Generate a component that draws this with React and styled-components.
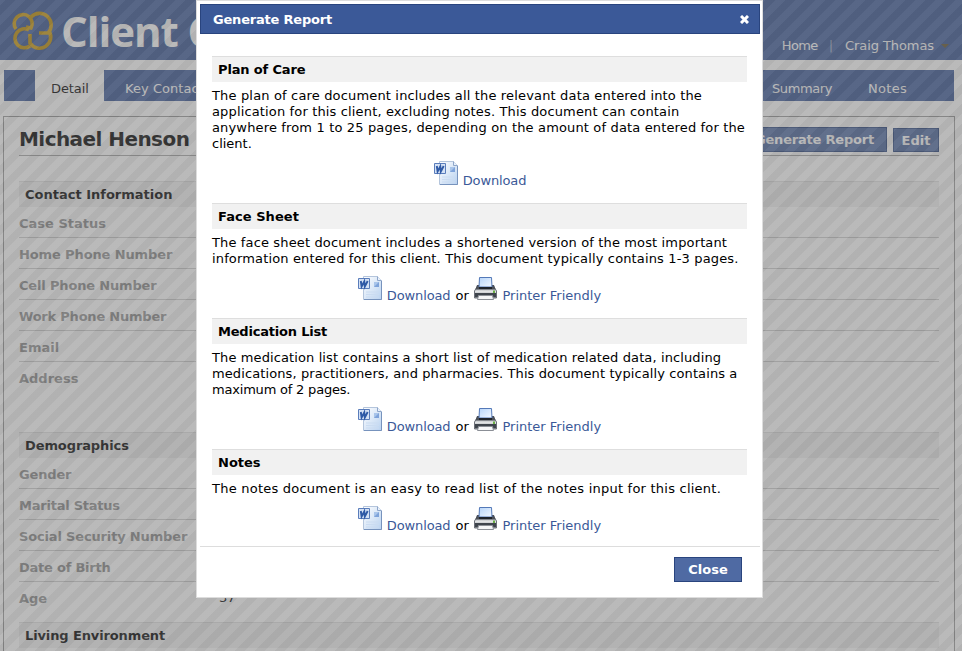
import React from "react";
import styled, { createGlobalStyle } from "styled-components";

const Global = createGlobalStyle`
  * { box-sizing: border-box; }
  html, body { margin: 0; height: 651px; overflow: hidden; background: #fff; }
  body { font: 13px/16px Verdana, "DejaVu Sans", sans-serif; color: #000; }
`;
const Stage = styled.div`position: relative; width: 962px; height: 651px; overflow: hidden;`;
const Header = styled.header`
  height: 60px; background: #3b5998; color: #fff; display: flex;
  padding-left: 11px;
`;
const Brand = styled.div`
  display: flex; flex: 1; white-space: nowrap; overflow: hidden;
  font: bold 42px/61px "Open Sans", sans-serif; letter-spacing: -1.05px;
  svg { margin: 10px 6px 0 0; flex: none; }
`;
const TopLinks = styled.nav`
  display: flex; gap: 12px; padding: 38px 13px 0 0; align-items: baseline; height: 60px;
  letter-spacing: -.08px;
`;
const Home = styled.span`letter-spacing: -.6px; margin-right: -1px;`;
const Divider = styled.span`color: #9aa6c4;`;
const Caret = styled.span`
  border: 4px solid transparent; border-top-color: #6b5a30; border-bottom: 0;
  align-self: flex-start; margin: 6px 0 0 -5px;
`;
const Tabs = styled.nav`display: flex; height: 31px; margin: 10px 8px 0 4px; background: #3b5998;`;
const Tab = styled.span`
  width: ${p => p.$w}px; padding: 11px 0 0 ${p => p.$pad || 0}px; flex: none;
  letter-spacing: ${p => p.$ls || 0}px; white-space: nowrap;
  color: ${p => (p.$active ? "#000" : "#fff")};
  background: ${p => (p.$active ? "#fff" : "transparent")};
`;
const Panel = styled.main`
  margin: 15px 7px 0 3px; height: 600px; border: 1px solid #999; padding: 8px 15px;
`;
const TitleRow = styled.div`
  display: flex; align-items: flex-start; height: 31px; border-bottom: 1px solid #a4a4a4; gap: 6px;
`;
const Title = styled.h1`flex: 1; margin: 0; font-size: 20px; line-height: 28px; letter-spacing: -.56px;`;
const Button = styled.button`
  height: ${p => p.$h || 25}px; width: ${p => p.$w}px; border: 1px solid #29447e;
  padding: 1px ${p => p.$shift || 0}px 0 0;
  margin-top: ${p => p.$top || 0}px; display: flex; justify-content: center; align-items: center;
  background: #4f6aa3; color: #fff; font: bold 13px/16px Verdana, "DejaVu Sans", sans-serif;
  white-space: nowrap; letter-spacing: ${p => p.$ls || 0}px;
`;
const Heading = styled.h2`
  margin: ${p => p.$top || 0}px 0 0; height: 26px; padding: 5px 6px 0; font-size: 13px; line-height: 16px;
  background: #f1f1f1; border-top: 1px solid #dedede; letter-spacing: ${p => p.$ls || 0}px;
`;
const Field = styled.div`
  height: ${p => p.$h || 31}px; display: flex; padding-top: 9px;
  border-bottom: 1px solid ${p => (p.$last ? "transparent" : "#ccc")};
`;
const Label = styled.b`width: 200px; color: #8f8f8f; white-space: nowrap; letter-spacing: ${p => p.$ls || 0}px;`;
const Value = styled.span`margin-top: -1px;`;
const Overlay = styled.div`
  position: absolute; inset: 0;
  background: repeating-linear-gradient(-45deg, #75757580 0 7.071px, #65656580 7.071px 14.142px) 5px 0 / 40px 40px;
`;
const Dialog = styled.section`
  position: absolute; left: 196px; top: 0; width: 567px; height: 598px;
  background: #fff; border: 1px solid #ddd; padding: 3px 2px 0 3px;
`;
const DialogTitle = styled.div`
  height: 30px; border: 1px solid #29447e; background: #3b5998; color: #fff; letter-spacing: -.2px;
  display: flex; justify-content: space-between; align-items: center; padding: 1px 10px 0 12px; font-weight: bold;
  svg { margin-bottom: 1px; }
`;
const Body = styled.div`padding: 22px 13px 0 12px; height: 512px;`;
const Report = styled.article`height: ${p => p.$h}px;`;
const Copy = styled.p`margin: 6px 0 0; white-space: nowrap;`;
const Line = styled.span`display: block; letter-spacing: ${p => p.$ls || 0}px;`;
const Actions = styled.div`
  display: flex; justify-content: center; align-items: flex-end; margin-top: 9px; height: 28px;
  padding-left: ${p => (p.$single ? 1 : 0)}px;
  white-space: pre; svg { margin-bottom: 3px; }
`;
const Link = styled.a`color: #3b5998; padding-left: 5px; letter-spacing: ${p => p.$ls || 0}px;`;
const Or = styled.span`width: 24px; padding-left: 5px;`;
const Footer = styled.footer`
  border-top: 1px solid #ddd; height: 50px; display: flex; justify-content: flex-end; padding: 10px 18px 0;
`;

const Word = () => <svg width="24" height="25" viewBox="0 0 24 25">
  <defs><linearGradient id="pg" x1="0" y1="0" x2="1" y2="1"><stop stopColor="#fff" /><stop offset="1" stopColor="#b9d2f0" /></linearGradient></defs>
  <path d="M5.5.5h14l4 4v19h-18z" fill="url(#pg)" stroke="#b4c5dc" />
  <path d="M23.500 5v18.500H6" fill="none" stroke="#7793bd" />
  <path d="M19.500.5v4h4" fill="#e9f1fb" stroke="#8fa6c9" />
  <path d="M8 16h13M8 18.500h13M8 21h13" stroke="#cbdcf1" />
  <path d="M16 6h5v5h-5z" fill="#a9c5ea" /><path d="M16 11l5-5v5z" fill="#7fa3da" />
  <path d="M.5 2.500h11v10H.5z" fill="#d5e2f5" stroke="#5a7dbb" />
  <path d="M2.800 5l.8 5.500L6.300 5.500l.5 5 2.900-5.500" fill="none" stroke="#2f5aa6" strokeWidth="1.900" />
</svg>;
const Printer = () => <svg width="23" height="25" viewBox="0 0 23 25">
  <defs>
    <linearGradient id="paper" x1="0" y1="0" x2="1" y2="1"><stop stopColor="#b7d5fa" /><stop offset="1" stopColor="#f4f9ff" /></linearGradient>
    <linearGradient id="case" x1="0" y1="0" x2="0" y2="1"><stop stopColor="#7d8188" /><stop offset=".45" stopColor="#e2e4e6" /><stop offset="1" stopColor="#85898f" /></linearGradient>
  </defs>
  <path d="M3.500 10h16l3 5v7H.5v-7z" fill="url(#case)" stroke="#6c7078" />
  <path d="M3 9h17l1.500 4.500h-20z" fill="#4a4f57" />
  <path d="M5.500 1.500h12l.5 9.500H5z" fill="url(#paper)" stroke="#5479b8" />
  <path d="M5 12h13" stroke="#1f242b" strokeWidth="2" />
  <path d="M1 17h21v4H1z" fill="#3f454d" />
  <path d="M4.500 19.500h14l1 4h-16z" fill="#f5f6f8" stroke="#8b8f96" />
  <path d="M19 14.500h2V17h-2z" fill="#69ad45" />
</svg>;
const Logo = () => <svg width="44" height="43" viewBox="0 0 44 43" fill="none" stroke="#c99608" strokeWidth="3.600">
  <path d="M5 19A9 9 0 1 1 20 18L15 17" />
  <path d="M20 7A10.500 10.500 0 1 1 37 23H28" />
  <path d="M38 21A10.700 10.700 0 1 1 19 33V24" />
  <path d="M18 20A9.500 9.500 0 1 0 19 36" />
</svg>;
const Cross = () => <svg width="9" height="9" viewBox="0 0 9 9"><path d="M1 1l7 7M8 1L1 8" stroke="#fff" strokeWidth="3" /></svg>;

const reports = [
  { title: "Plan of Care", ls: -.15, h: 147, lines: [["The plan of care document includes all the relevant data entered into the", .16], ["application for this client, excluding notes. This document can contain", .147], ["anywhere from 1 to 25 pages, depending on the amount of data entered for the", .15], ["client.", 0]] },
  { title: "Face Sheet", ls: .05, h: 115, print: true, lines: [["The face sheet document includes a shortened version of the most important", .137], ["information entered for this client. This document typically contains 1-3 pages.", .145]] },
  { title: "Medication List", ls: -.2, h: 131, print: true, lines: [["The medication list contains a short list of medication related data, including", .11], ["medications, practitioners, and pharmacies. This document typically contains a", .105], ["maximum of 2 pages.", -.2]] },
  { title: "Notes", h: 99, print: true, lines: [["The notes document is an easy to read list of the notes input for this client.", .23]] },
];
const contact = [["Case Status", 0], ["Home Phone Number", -.12], ["Cell Phone Number", -.17], ["Work Phone Number", -.22], ["Email", 0]];
const demo = [["Gender", -.15], ["Marital Status", -.23], ["Social Security Number", -.16], ["Date of Birth", -.23]];

export default function App() {
  return <Stage><Global />
    <Header><Brand><Logo />Client C</Brand>
      <TopLinks><Home>Home</Home><Divider>|</Divider><span>Craig Thomas</span><Caret /></TopLinks></Header>
    <Tabs><Tab $w={31} /><Tab $w={69} $pad={16} $ls={-.1} $active>Detail</Tab><Tab $w={668} $pad={21} $ls={.05}>Key Contacts</Tab><Tab $w={96} $ls={-.4}>Summary</Tab><Tab $w={80} $ls={.3}>Notes</Tab></Tabs>
    <Panel>
      <TitleRow><Title>Michael Henson</Title><Button $w={141} $top={2} $ls={-.2} $shift={4}>Generate Report</Button><Button $w={46} $h={24} $top={3}>Edit</Button></TitleRow>
      <Heading $top={25}>Contact Information</Heading>
      {contact.map(([c, ls]) => <Field key={c}><Label $ls={ls}>{c}</Label></Field>)}
      <Field $h={70} $last><Label>Address</Label></Field>
      <Heading $ls={-.1}>Demographics</Heading>
      {demo.map(([c, ls]) => <Field key={c}><Label $ls={ls}>{c}</Label></Field>)}
      <Field $last><Label>Age</Label><Value>37</Value></Field>
      <Heading $top={9} $ls={-.12}>Living Environment</Heading>
    </Panel>
    <Overlay />
    <Dialog>
      <DialogTitle>Generate Report<Cross /></DialogTitle>
      <Body>{reports.map(r => <Report key={r.title} $h={r.h}><Heading $ls={r.ls}>{r.title}</Heading>
        <Copy>{r.lines.map(([l, ls]) => <Line key={l} $ls={ls}>{l}</Line>)}</Copy>
        <Actions $single={!r.print}><Word /><Link $ls={-.13}>Download</Link>{r.print && <><Or>or</Or><Printer /><Link>Printer Friendly</Link></>}</Actions></Report>)}</Body>
      <Footer><Button $w={68}>Close</Button></Footer>
    </Dialog>
  </Stage>;
}
